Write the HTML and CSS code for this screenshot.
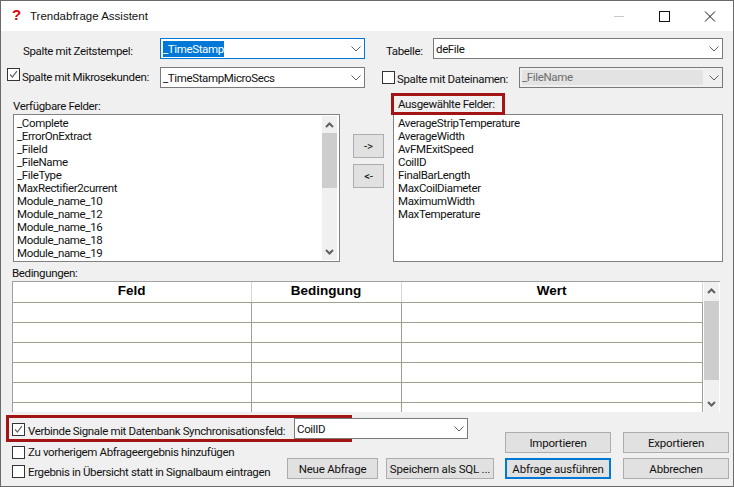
FILE: index.html
```html
<!DOCTYPE html>
<html lang="de">
<head>
  <meta charset="UTF-8">
  <title>Trendabfrage Assistent</title>
  <link rel="stylesheet" href="styles.css">
</head>
<body>

<svg class="defs" width="0" height="0">
  <symbol id="chev" viewBox="0 0 10 6"><path d="M0.5 0.5 L5 5 L9.5 0.5" fill="none" stroke="#606060" stroke-width="1"/></symbol>
  <symbol id="tick" viewBox="0 0 13 13"><path d="M2.5 6.5 L5.2 9.5 L10.5 2.5" fill="none" stroke="#606060" stroke-width="1.4"/></symbol>
  <symbol id="sb-up" viewBox="0 0 9 6"><path d="M1 5 L4.5 1.5 L8 5" fill="none" stroke="#606060" stroke-width="2"/></symbol>
  <symbol id="sb-down" viewBox="0 0 9 6"><path d="M1 1 L4.5 4.5 L8 1" fill="none" stroke="#606060" stroke-width="2"/></symbol>
</svg>

<div class="window">
  <div class="titlebar">
    <span class="app-icon">?</span>
    <span class="title">Trendabfrage Assistent</span>
    <svg class="controls" width="102" height="11" viewBox="0 0 102 11">
      <path d="M0 5.5 H10" stroke="#c8c8c8" fill="none"/>
      <rect x="45.5" y="0.5" width="10" height="10" stroke="#111" fill="none"/>
      <path d="M91 0.5 L101 10.5 M101 0.5 L91 10.5" stroke="#111" fill="none"/>
    </svg>
  </div>

  <div class="row row-first">
    <label class="lbl lbl-time">Spalte mit Zeitstempel:</label>
    <div class="combo combo-main focused"><span class="selected">_TimeStamp</span><svg class="chev"><use href="#chev"/></svg></div>
    <label class="lbl lbl-table">Tabelle:</label>
    <div class="combo combo-table"><span>deFile</span><svg class="chev"><use href="#chev"/></svg></div>
  </div>

  <div class="row row-second">
    <span class="check check-micro"><svg><use href="#tick"/></svg></span>
    <label class="lbl lbl-micro">Spalte mit Mikrosekunden:</label>
    <div class="combo combo-main"><span>_TimeStampMicroSecs</span><svg class="chev"><use href="#chev"/></svg></div>
    <span class="check check-file"></span>
    <label class="lbl lbl-file">Spalte mit Dateinamen:</label>
    <div class="combo combo-file"><span class="disabled-text">_FileName</span><svg class="chev"><use href="#chev"/></svg></div>
  </div>

  <div class="fields">
    <label class="lbl fields-label">Verfügbare Felder:</label>
    <span></span>
    <label class="lbl fields-picked">Ausgewählte Felder:</label>

    <div class="listbox">
      <ul class="items">
        <li>_Complete</li>
        <li>_ErrorOnExtract</li>
        <li>_FileId</li>
        <li>_FileName</li>
        <li>_FileType</li>
        <li>MaxRectifier2current</li>
        <li>Module_name_10</li>
        <li>Module_name_12</li>
        <li>Module_name_16</li>
        <li>Module_name_18</li>
        <li>Module_name_19</li>
      </ul>
      <div class="scrollbar list-scroll">
        <svg class="sb-arrow"><use href="#sb-up"/></svg>
        <div class="thumb list-thumb"></div>
        <svg class="sb-arrow sb-bottom"><use href="#sb-down"/></svg>
      </div>
    </div>

    <div class="move-btns">
      <button class="btn move">-&gt;</button>
      <button class="btn move">&lt;-</button>
    </div>

    <div class="listbox listbox-picked">
      <ul class="items">
        <li>AverageStripTemperature</li>
        <li>AverageWidth</li>
        <li>AvFMExitSpeed</li>
        <li>CoilID</li>
        <li>FinalBarLength</li>
        <li>MaxCoilDiameter</li>
        <li>MaximumWidth</li>
        <li>MaxTemperature</li>
      </ul>
    </div>
  </div>

  <label class="lbl cond-label">Bedingungen:</label>
  <div class="cond">
    <table class="cond-table">
      <colgroup><col class="col-a"><col class="col-b"><col></colgroup>
      <tr><th>Feld</th><th>Bedingung</th><th>Wert</th></tr>
      <tr><td></td><td></td><td></td></tr>
      <tr><td></td><td></td><td></td></tr>
      <tr><td></td><td></td><td></td></tr>
      <tr><td></td><td></td><td></td></tr>
      <tr><td></td><td></td><td></td></tr>
      <tr><td></td><td></td><td></td></tr>
    </table>
    <div class="scrollbar cond-scroll">
      <svg class="sb-arrow"><use href="#sb-up"/></svg>
      <div class="thumb cond-thumb"></div>
      <svg class="sb-arrow sb-bottom"><use href="#sb-down"/></svg>
    </div>
  </div>

  <div class="bottom">
    <div class="highlight"></div>
    <div class="bottom-left">
      <div class="sync-row">
        <span class="check check-sync"><svg><use href="#tick"/></svg></span>
        <label class="lbl sync-label">Verbinde Signale mit Datenbank Synchronisationsfeld:</label>
        <div class="combo combo-sync"><span>CoilID</span><svg class="chev"><use href="#chev"/></svg></div>
      </div>
      <div class="check-row">
        <span class="check"></span>
        <label class="lbl">Zu vorherigem Abfrageergebnis hinzufügen</label>
      </div>
      <div class="check-row check-row-last">
        <span class="check check-last"></span>
        <label class="lbl overview">Ergebnis in Übersicht statt in Signalbaum eintragen</label>
        <button class="btn btn-new">Neue Abfrage</button>
        <button class="btn btn-sql">Speichern als SQL ...</button>
      </div>
    </div>
    <div class="actions">
      <button class="btn">Importieren</button>
      <button class="btn">Exportieren</button>
      <button class="btn primary">Abfrage ausführen</button>
      <button class="btn">Abbrechen</button>
    </div>
  </div>
</div>

</body>
</html>
```

FILE: styles.css
```css
* {
  box-sizing: border-box;
}
body {
  margin: 0;
  font-family: Roboto, "Liberation Sans", sans-serif;
  font-size: 11.5px;
  letter-spacing: -0.36px;
  color: #111;
}
.defs {
  position: absolute;
}
.window {
  width: 734px;
  height: 487px;
  border: 1px solid #6a6a6a;
  background: #f0f0f0;
  overflow: hidden;
}
.titlebar {
  height: 30px;
  background: white;
  display: flex;
  align-items: center;
  letter-spacing: 0;
}
.app-icon {
  width: 29px;
  padding-left: 11px;
  color: #e00000;
  font-family: "Liberation Sans", sans-serif;
  font-weight: bold;
  font-size: 15px;
  margin-top: -3px;
}
.title {
  font-family: "Liberation Sans", sans-serif;
  font-size: 11.5px;
}
.controls {
  margin-left: auto;
  margin-right: 17px;
}

.row {
  display: flex;
  align-items: center;
  height: 21px;
}
.row-first {
  margin-top: 7px;
}
.row-second {
  margin-top: 8px;
}
.lbl {
  white-space: nowrap;
}
.lbl-time {
  margin-left: 22px;
  margin-top: 4px;
  width: 137px;
}
.lbl-table {
  margin-left: 21px;
  margin-top: 4px;
  width: 47px;
}
.lbl-micro {
  margin-left: 2px;
  margin-bottom: 2px;
  width: 138px;
}
.lbl-file {
  margin-left: 2px;
  margin-top: 2px;
  width: 122px;
}
.check {
  flex: none;
  width: 13px;
  height: 13px;
  border: 1px solid #333;
  background: white;
  display: block;
}
.check svg {
  display: block;
  width: 11px;
  height: 11px;
}
.check-micro {
  margin-left: 6px;
  margin-bottom: 6px;
}
.check-file {
  margin-left: 17px;
}
.check-sync {
  margin-top: 2px;
}
.check-last {
  margin-top: 6px;
}

.combo {
  height: 21px;
  background: white;
  border: 1px solid #7a7a7a;
  display: flex;
  align-items: center;
  padding-left: 2px;
  position: relative;
}
.chev {
  position: absolute;
  right: 3px;
  top: 7px;
  width: 10px;
  height: 6px;
}
.combo-main {
  width: 205px;
}
.combo-table {
  width: 290px;
}
.combo-file {
  width: 204px;
  background: #f0f0f0;
}
.combo-sync {
  width: 174px;
}
.focused {
  border-color: #0078d7;
}
.selected {
  background: #0078d7;
  color: white;
  padding: 1px 0;
}
.disabled-text {
  display: block;
  width: 181px;
  height: 15px;
  line-height: 15px;
  color: #6d6d6d;
  background: #e3e3e3;
}

.fields {
  display: grid;
  grid-template-columns: 327px 53px 330px;
  grid-template-rows: 21px 148px;
  margin: 5px 0 0 12px;
}
.fields-label {
  align-self: end;
  line-height: 16px;
}
.fields-picked {
  justify-self: start;
  margin-left: -2px;
  width: 114px;
  height: 22px;
  border: 3px solid #a31515;
  padding-left: 4px;
  line-height: 16px;
  position: relative;
  z-index: 1;
}
.listbox {
  background: white;
  border: 1px solid #828282;
  display: flex;
  overflow: hidden;
}
.items {
  list-style: none;
  margin: 0;
  padding: 2px 0 0 3px;
  flex: 1;
}
.listbox-picked .items {
  padding-left: 4px;
}
.items li {
  height: 13px;
  line-height: 13px;
  white-space: nowrap;
}
.scrollbar {
  flex: none;
  background: #f0f0f0;
  position: relative;
  display: flex;
  flex-direction: column;
  align-items: center;
}
.list-scroll {
  width: 15px;
  margin: 1px 2px 1px 0;
}
.sb-arrow {
  width: 9px;
  height: 6px;
  margin-top: 6px;
  flex: none;
}
.sb-bottom {
  margin: auto 0 5px;
}
.thumb {
  width: 100%;
  background: #cdcdcd;
  flex: none;
}
.list-thumb {
  height: 55px;
  margin-top: 5px;
}
.move-btns {
  display: flex;
  flex-direction: column;
  gap: 6px;
  padding: 20px 0 0 13px;
}
.btn {
  font: inherit;
  letter-spacing: -0.2px;
  color: #111;
  background: #e1e1e1;
  border: 1px solid #adadad;
  padding: 0;
  white-space: nowrap;
}
.move {
  width: 31px;
  height: 24px;
}

.cond-label {
  display: block;
  margin: 4px 0 0 11px;
  height: 15px;
  line-height: 15px;
}
.cond {
  margin-left: 11px;
  width: 708px;
  height: 131px;
  background: white;
  border-top: 1px solid #a0a0a0;
  border-left: 1px solid #a0a0a0;
  display: flex;
  overflow: hidden;
}
.cond-table {
  border-collapse: collapse;
  table-layout: fixed;
  width: 690px;
  flex: none;
  align-self: flex-start;
}
.col-a {
  width: 238px;
}
.col-b {
  width: 150px;
}
.cond-table th {
  height: 20px;
  padding: 0 0 3px;
  font-family: "Liberation Sans", sans-serif;
  font-size: 13.5px;
  font-weight: bold;
  letter-spacing: 0;
  color: #000;
  border-right: 1px solid #d8d8d0;
  border-bottom: 1px solid #a0a090;
}
.cond-table td {
  height: 20px;
  padding: 0;
  border-right: 1px solid #a0a090;
  border-bottom: 1px solid #a0a090;
}
.cond-scroll {
  width: 15px;
  margin-left: 1px;
}
.cond-thumb {
  height: 79px;
  margin-top: 7px;
}

.bottom {
  position: relative;
  display: flex;
  height: 70px;
}
.highlight {
  position: absolute;
  left: 5px;
  top: 3px;
  width: 346px;
  height: 27px;
  border: 3px solid #a31515;
  pointer-events: none;
}
.bottom-left {
  width: 504px;
  padding-left: 11px;
}
.sync-row {
  display: flex;
  align-items: center;
  height: 21px;
  margin-top: 6px;
}
.sync-label {
  margin-left: 3px;
  margin-top: 4px;
  width: 266px;
}
.check-row {
  display: flex;
  align-items: center;
  height: 14px;
  margin-top: 6px;
}
.check-row .lbl {
  margin-left: 3px;
}
.check-row-last {
  height: 21px;
  margin-top: -1px;
}
.check-row-last .overview {
  margin-top: 6px;
  width: 259px;
}
.btn-new {
  width: 91px;
  height: 21px;
  flex: none;
}
.btn-sql {
  width: 108px;
  height: 21px;
  flex: none;
  margin-left: 8px;
}
.actions {
  display: grid;
  grid-template-columns: 106px 106px;
  grid-template-rows: 21px 21px;
  column-gap: 12px;
  row-gap: 5px;
  margin-top: 20px;
  align-self: flex-start;
}
.primary {
  border: 2px solid #0078d7;
}
```
